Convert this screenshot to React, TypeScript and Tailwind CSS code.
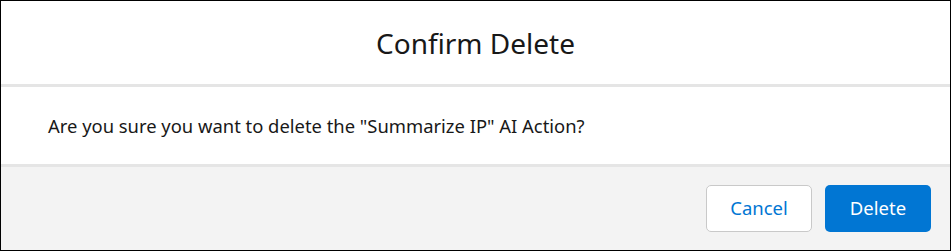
import React from "react";

const ConfirmDelete = () => {
  return (
    <div className="w-[951px] h-[251px] border border-black bg-white flex flex-col font-['Noto_Sans','Open_Sans',sans-serif] text-[#181818]">
      <div className="h-[86px] flex items-center justify-center border-b-[3px] border-[#e5e5e5]">
        <h2 className="text-[28px] leading-none">Confirm Delete</h2>
      </div>
      <div className="h-[80px] flex items-center px-[47px] border-b-[3px] border-[#e5e5e5]">
        <p className="text-[18.4px]">
          Are you sure you want to delete the "Summarize IP" AI Action?
        </p>
      </div>
      <div className="flex-1 bg-[#f3f3f3] flex items-center justify-end gap-[13px] pr-[19px] pb-[1px]">
        <button className="w-[106px] h-[47px] rounded-[5px] border border-[#c9c9c9] bg-white text-[#0176d3] text-[18.5px]">
          Cancel
        </button>
        <button className="w-[106px] h-[47px] rounded-[5px] bg-[#0176d3] text-white text-[18.5px]">
          Delete
        </button>
      </div>
    </div>
  );
};

export default function App() {
  return <ConfirmDelete />;
}
